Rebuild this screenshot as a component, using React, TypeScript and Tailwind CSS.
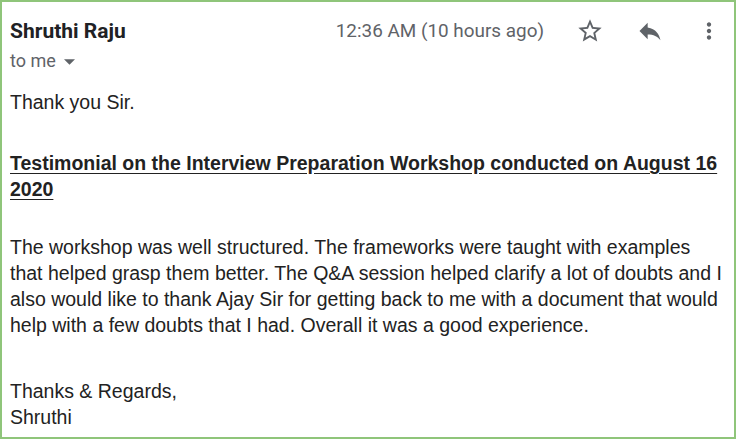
function StarOutline() {
  return (
    <svg width="28" height="28" viewBox="0 0 24 24" fill="#5f6368">
      <path d="M22 9.24l-7.19-.62L12 2 9.19 8.63 2 9.24l5.46 4.73L5.82 21 12 17.27 18.18 21l-1.63-7.03L22 9.24zM12 15.4l-3.76 2.27 1-4.28-3.32-2.88 4.38-.38L12 6.1l1.71 4.04 4.38.38-3.32 2.88 1 4.28L12 15.4z" />
    </svg>
  );
}

function ReplyIcon() {
  return (
    <svg width="28" height="28" viewBox="0 0 24 24" fill="#5f6368">
      <path d="M10 9V5l-7 7 7 7v-4.1c5 0 8.5 1.6 11 5.1-1-5-4-10-11-11z" />
    </svg>
  );
}

function MoreIcon() {
  return (
    <svg width="26" height="26" viewBox="0 0 24 24" fill="#5f6368">
      <path d="M12 8c1.1 0 2-.9 2-2s-.9-2-2-2-2 .9-2 2 .9 2 2 2zm0 2c-1.1 0-2 .9-2 2s.9 2 2 2 2-.9 2-2-.9-2-2-2zm0 6c-1.1 0-2 .9-2 2s.9 2 2 2 2-.9 2-2-.9-2-2-2z" />
    </svg>
  );
}

export default function App() {
  return (
    <div className="w-[737px] h-[440px] bg-white">
      <div className="w-[736px] h-[439px] border-2 border-[#8fc57a] bg-white">
        {/* header */}
        <div className="flex items-start pl-[8px] pr-[12px] pt-[16px]">
          <div className="flex-1">
            <div className="font-['Roboto',sans-serif] font-bold text-[21px] leading-[26px] text-[#202124]">
              Shruthi Raju
            </div>
            <div className="flex items-center gap-[8px] font-['Roboto',sans-serif] text-[18px] leading-[26px] text-[#5f6368] mt-[4px]">
              to me
              <svg width="11" height="6" viewBox="0 0 10 5" className="mt-[1px]">
                <path d="M0 0h10L5 5z" fill="#5f6368" />
              </svg>
            </div>
          </div>
          <div className="flex items-center h-[26px] font-['Roboto',sans-serif] text-[18.9px] text-[#5f6368]">
            12:36 AM (10 hours ago)
          </div>
          <div className="flex items-center h-[26px] ml-[32px] gap-[32px]">
            <StarOutline />
            <ReplyIcon />
            <MoreIcon />
          </div>
        </div>

        {/* body */}
        <div className="pl-[8px] pr-[8px] pt-[15px] font-['Liberation_Sans',Arial,sans-serif] text-[19.5px] leading-[26px] text-[#222222]">
          <p>Thank you Sir.</p>
          <p className="mt-[35px] font-bold underline underline-offset-[3px]">
            Testimonial on the Interview Preparation Workshop conducted on August 16 2020
          </p>
          <p className="mt-[32px]">
            The workshop was well structured. The frameworks were taught with examples that helped grasp them
            better. The Q&amp;A session helped clarify a lot of doubts and I also would like to thank Ajay Sir for
            getting back to me with a document that would help with a few doubts that I had. Overall it was a good
            experience.
          </p>
          <p className="mt-[40px]">Thanks &amp; Regards,</p>
          <p>Shruthi</p>
        </div>
      </div>
    </div>
  );
}
